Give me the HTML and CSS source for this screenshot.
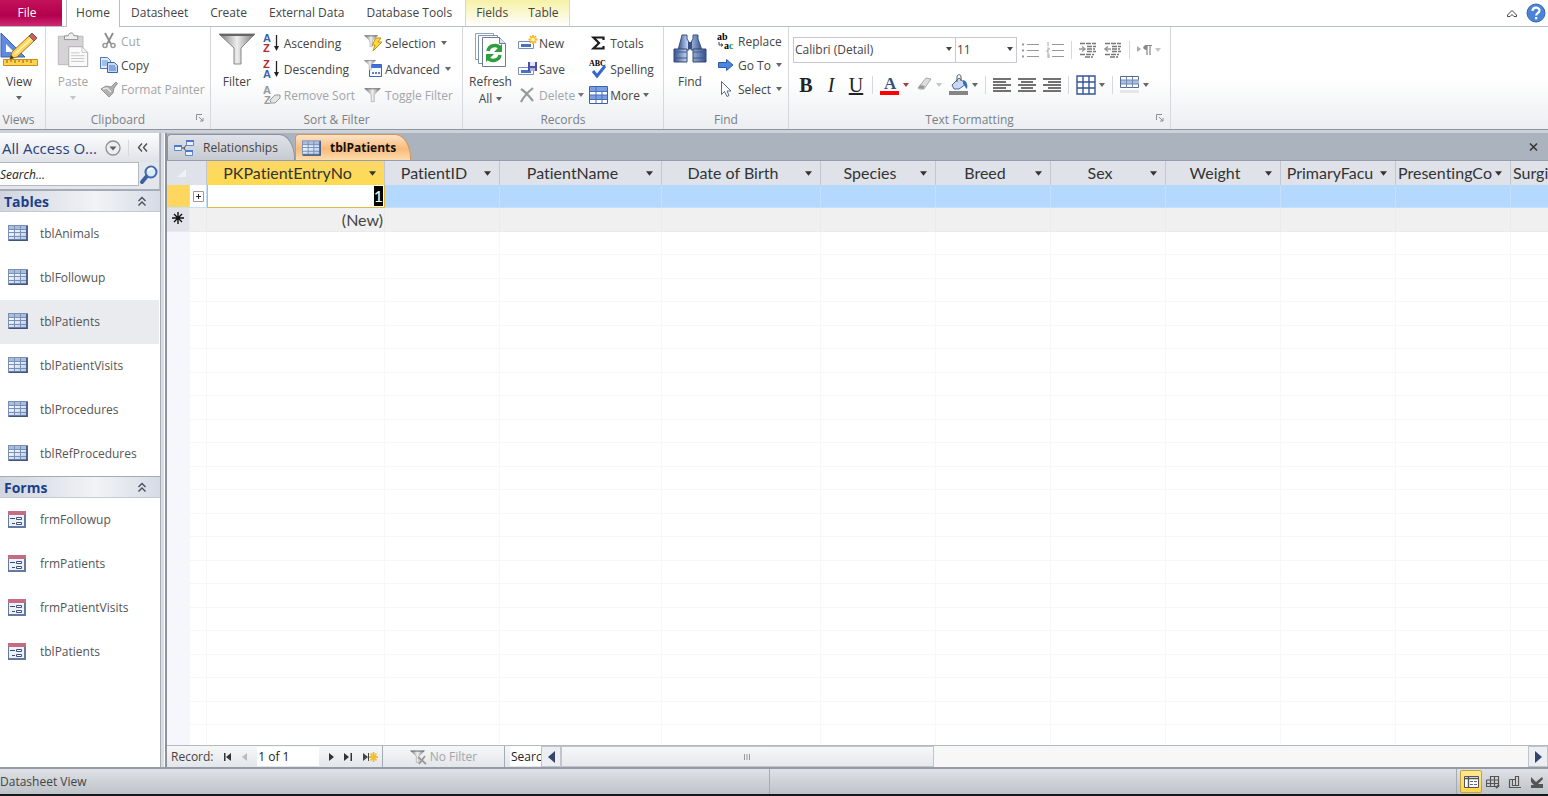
FILE: index.html
```html
<!DOCTYPE html>
<html lang="en">
    <head>
        <meta charset="UTF-8" />
        <meta name="viewport" content="width=device-width, initial-scale=1.0" />
        <title>tblPatients</title>
        <link rel="stylesheet" href="styles.css">
    </head>
    <body>
        <!-- Shared icons -->
        <svg class="defs" width="0" height="0">
            <defs>
                <linearGradient id="gray" x1="0" x2="1"><stop offset="0" stop-color="#777" /><stop offset=".5" stop-color="#eee" /><stop offset="1" stop-color="#777" /></linearGradient>
                <linearGradient id="blue" x1="0" x2="1"><stop offset="0" stop-color="#33528f" /><stop offset=".4" stop-color="#c3d5f3" /><stop offset="1" stop-color="#33528f" /></linearGradient>
                <linearGradient id="cell" x1="0" y1="0" x2="1" y2="1"><stop offset="0" stop-color="#fff" /><stop offset="1" stop-color="#b4c8ea" /></linearGradient>
            </defs>
            <symbol id="down" viewBox="0 0 6 4"><path d="M0 0h6L3 4z" fill="currentColor" /></symbol>
            <symbol id="table" viewBox="0 0 20 16">
                <path d="M0 0h20v16H0z" fill="#7890b8" />
                <path d="M19 1v14.500H1" fill="none" stroke="#3f5478" stroke-width="1.500" />
                <path d="M1 1h5v3H1zM7 1h5v3H7zM13 1h5v3h-5z" fill="#a9bede" />
                <path d="M1 5h5v2H1zM7 5h5v2H7zM13 5h5v2h-5zM1 8h5v3H1zM7 8h5v3H7zM13 8h5v3h-5zM1 12h5v2H1zM7 12h5v2H7zM13 12h5v2h-5z" fill="url(#cell)" />
            </symbol>
            <symbol id="form" viewBox="0 0 18 17">
                <path d="M0 0h18v17H0z" fill="#64799f" /><path d="M1 4h15v11H1z" fill="#edf1fa" />
                <path d="M0 0h18v4H0z" fill="#c66c82" />
                <path d="M2 7.500h5M4 12.500h3" stroke="#3c4d75" /><path d="M8.500 6.500h5v2h-5zM8.500 11.500h5v2h-5z" fill="#fff" stroke="#3f5184" />
            </symbol>
            <symbol id="funnel" viewBox="0 0 38 34"><path d="M1 1h36L23 15v16h-7V15z" fill="url(#gray)" stroke="#888" /><path d="M1 1h36l-2 2H3z" fill="#666" /></symbol>
            <symbol id="record" viewBox="0 0 20 14"><path d="M.5 5.500h15v7H.5z" fill="#fff" stroke="#7b8fb4" /><path d="M3 8h10v3H3z" fill="#4474c4" /></symbol>
            <symbol id="launcher" viewBox="0 0 8 8"><path d="M.5 6V.5H6M3 3l4 4M7 4v3H4" fill="none" stroke="#8a8f98" /></symbol>
            <symbol id="chev" viewBox="0 0 10 10"><path d="M1.500 5L5 1.500 8.500 5M1.500 9.500L5 6l3.500 3.500" fill="none" stroke="#4a4f58" stroke-width="1.400" /></symbol>
        </svg>

        <div class="app">
            <nav class="tabs">
                <button class="tab file">File</button>
                <button class="tab home">Home</button>
                <button class="tab">Datasheet</button>
                <button class="tab">Create</button>
                <button class="tab">External Data</button>
                <button class="tab">Database Tools</button>
                <div class="context-tabs">
                    <button class="tab">Fields</button>
                    <button class="tab">Table</button>
                </div>
                <div class="tabs-right">
                    <button class="icon-btn" aria-label="Minimize the Ribbon">
                        <svg width="12" height="9"><path d="M1.500 6L6 1.500 10.500 6v1.500H8L6 5.500l-2 2H1.500z" fill="#fff" stroke="#444" /></svg>
                    </button>
                    <button class="icon-btn" aria-label="Help">
                        <svg width="20" height="20"><circle cx="10" cy="10" r="9" fill="#4a83d8" stroke="#3566b0" /><path d="M6.500 8c0-4.500 7-4.500 7-.5 0 2.500-3.300 2.300-3.300 5" fill="none" stroke="#fff" stroke-width="2.200" /><path d="M9 14h2.300v2.300H9z" fill="#fff" /></svg>
                    </button>
                </div>
            </nav>

            <div class="ribbon">
                <section class="group views">
                    <div class="group-body">
                        <button class="big">
                            <svg width="38" height="36" viewBox="0 0 38 36">
                                <path d="M1 1v24h24z" fill="#5f8ae0" stroke="#3a60b4" /><path d="M6 12v8h8z" fill="#fff" />
                                <path d="M3.500 27.500h34v6h-34z" fill="#ffd34d" stroke="#c98f1c" /><path d="M7 28v3M11 28v2M15 28v3M19 28v2M23 28v3M27 28v2M31 28v3" stroke="#8a5c10" />
                                <path d="M12 20L30 3l5 5-18 17-7 2z" fill="#ffd45c" stroke="#9c7321" /><path d="M15 22L32 6" stroke="#fff3b5" stroke-width="1.500" /><path d="M29 4l3-3 5 5-3 3z" fill="#d9575b" stroke="#517157" /><path d="M10 27l1-4 3 3z" fill="#333" />
                            </svg>
                            <span>View</span>
                            <svg class="arrow" width="6" height="4"><use href="#down" /></svg>
                        </button>
                    </div>
                    <h2>Views</h2>
                </section>

                <section class="group clipboard">
                    <div class="group-body">
                        <button class="big" disabled>
                            <svg width="34" height="36" viewBox="0 0 34 38">
                                <path d="M1.500 4.500h26v30h-26z" fill="#d6d3d6" stroke="#b9b6b9" /><path d="M8 8V4h4c0-4 6-4 6 0h4v4z" fill="#eee" stroke="#8f8f8f" />
                                <path d="M12.500 15.500h14l6 6v15h-20z" fill="#fafafa" stroke="#aaa" /><path d="M26.500 15.500v6h6M15 22h9M15 25h14M15 28h14M15 31h14" fill="none" stroke="#c4c4c4" />
                            </svg>
                            <span>Paste</span>
                            <svg class="arrow" width="6" height="4"><use href="#down" /></svg>
                        </button>
                        <div class="col tight">
                            <button class="small" disabled>
                                <svg width="18" height="18"><path d="M5 1l6 11M13 1L7 12" stroke="#8c8c8c" stroke-width="1.800" /><circle cx="5" cy="13.500" r="2" fill="none" stroke="#999" stroke-width="1.500" /><circle cx="13" cy="13.500" r="2" fill="none" stroke="#999" stroke-width="1.500" /></svg>
                                Cut
                            </button>
                            <button class="small">
                                <svg width="18" height="18"><path d="M.5 1.500h7l3 3v8H.5z" fill="#e0ebfc" stroke="#4c76bd" /><path d="M2 5h6M2 7h6M2 9h6" stroke="#6d93d3" /><path d="M7.500 6.500h7l3 3v7h-10z" fill="#c6daf8" stroke="#3a64ae" /><path d="M9 10h6M9 12h7M9 14h7" stroke="#4574c4" /></svg>
                                Copy
                            </button>
                            <button class="small" disabled>
                                <svg width="18" height="18"><path d="M1 9l5-3 5 1 5-5 1.500 1.500L14 8l-1 5-4 4-4-4z" fill="#b0b0b0" stroke="#949494" /><path d="M3 9l4-1 4 4" fill="none" stroke="#e5e5e5" stroke-width="1.500" /></svg>
                                Format Painter
                            </button>
                        </div>
                    </div>
                    <h2>Clipboard</h2>
                    <button class="launcher" aria-label="Clipboard options"><svg width="8" height="8"><use href="#launcher" /></svg></button>
                </section>

                <section class="group sort">
                    <div class="group-body">
                        <button class="big">
                            <svg width="38" height="36"><use href="#funnel" width="38" height="34" y="1" /></svg>
                            <span>Filter</span>
                        </button>
                        <div class="col">
                            <button class="small">
                                <svg width="18" height="20"><text x="0" y="9" class="az blue">A</text><text x="0" y="19" class="az red">Z</text><path d="M13.500 2v13" stroke="#222" stroke-width="1.300" /><path d="M11 13h5l-2.500 5z" fill="#222" /></svg>
                                Ascending
                            </button>
                            <button class="small">
                                <svg width="18" height="20"><text x="0" y="9" class="az red">Z</text><text x="0" y="19" class="az blue">A</text><path d="M13.500 2v13" stroke="#222" stroke-width="1.300" /><path d="M11 13h5l-2.500 5z" fill="#222" /></svg>
                                Descending
                            </button>
                            <button class="small" disabled>
                                <svg width="18" height="20"><text x="0" y="9" class="az gray">A</text><text x="1" y="19" class="az gray">Z</text><path d="M7 15l5-5h5v3l-5 5H8z" fill="#e4e4e4" stroke="#999" /></svg>
                                Remove Sort
                            </button>
                        </div>
                        <div class="col">
                            <button class="small">
                                <svg width="18" height="18"><use href="#funnel" width="14" height="13" y="1" /><path d="M12 4h5l-3 4h4l-9 9 2-6H8z" fill="#ffd83a" stroke="#c39217" /></svg>
                                Selection
                                <svg class="arrow" width="6" height="4"><use href="#down" /></svg>
                            </button>
                            <button class="small">
                                <svg width="18" height="18"><path d="M5.500 4.500h12v12h-12z" fill="#f4f8ff" stroke="#3c66b8" /><path d="M6 5h11v3H6z" fill="#3f72d8" /><path d="M8 13h2M11 13h2M14 13h2" stroke="#36588f" stroke-width="1.500" /><use href="#funnel" width="12" height="11" /></svg>
                                Advanced
                                <svg class="arrow" width="6" height="4"><use href="#down" /></svg>
                            </button>
                            <button class="small" disabled>
                                <svg width="18" height="18"><use href="#funnel" width="17" height="15" y="2" /></svg>
                                Toggle Filter
                            </button>
                        </div>
                    </div>
                    <h2>Sort &amp; Filter</h2>
                </section>

                <section class="group records">
                    <div class="group-body">
                        <button class="big">
                            <svg width="34" height="36" viewBox="0 0 34 36">
                                <path d="M1.500 1.500h18v26h-18z" fill="#fff" stroke="#8fa1be" /><path d="M4.500 3.500h19v28h-19z" fill="#fff" stroke="#8091b0" /><path d="M8.500 5.500h17l6 6v23h-23z" fill="#fff" stroke="#6a7b98" /><path d="M25.500 5.500v6h6" fill="#dde5f2" stroke="#6a7b98" />
                                <path d="M14 19c1-6 9-7 12-3" fill="none" stroke="#2f9e3f" stroke-width="3.500" /><path d="M28 12v8h-8z" fill="#2f9e3f" /><path d="M26 23c-1 6-9 7-12 3" fill="none" stroke="#2f9e3f" stroke-width="3.500" /><path d="M12 30v-8h8z" fill="#2f9e3f" />
                            </svg>
                            <span>Refresh</span>
                            <span class="line">All <svg class="arrow" width="6" height="4"><use href="#down" /></svg></span>
                        </button>
                        <div class="col">
                            <button class="small">
                                <svg width="20" height="16"><use href="#record" width="20" height="14" y="1" /><path d="M15 0v9M10.500 4.500h9M12 1l6 7M18 1l-6 7" stroke="#f2b526" stroke-width="1.800" /><circle cx="15" cy="4.500" r="2" fill="#fff3a8" /></svg>
                                New
                            </button>
                            <button class="small">
                                <svg width="20" height="16"><use href="#record" width="20" height="14" y="1" /><path d="M10 1h9v9h-9z" fill="#4b4fa5" /><path d="M12 1h5v4h-5z" fill="#dfe7fa" /><path d="M12 7h5v3h-5z" fill="#aeb4dc" /></svg>
                                Save
                            </button>
                            <button class="small" disabled>
                                <svg width="20" height="16"><path d="M3 2c5 3 8 7 12 12M15 1C10 5 6 9 3 15" fill="none" stroke="#999" stroke-width="2.200" /></svg>
                                Delete
                                <svg class="arrow dark" width="6" height="4"><use href="#down" /></svg>
                            </button>
                        </div>
                        <div class="col">
                            <button class="small">
                                <svg width="20" height="18"><path d="M14.500 6V3.500h-10L10 9l-5.500 5.500h10V12" fill="none" stroke="#1c1c1c" stroke-width="2.200" /></svg>
                                Totals
                            </button>
                            <button class="small">
                                <svg width="20" height="20"><text x="0" y="7" class="abc">ABC</text><path d="M4 12l4 5 8-10" fill="none" stroke="#3568c8" stroke-width="3" /></svg>
                                Spelling
                            </button>
                            <button class="small">
                                <svg width="20" height="20"><path d="M.5 1.500h18v17H.5z" fill="#fff" stroke="#3b62ac" /><path d="M1 2h17v4H1zM1 10h17v4H1z" fill="#7ba0e2" /><path d="M1 6.500h17M1 10h17M1 14.500h17M7 2v16M13 6v12" stroke="#4870ba" /></svg>
                                More
                                <svg class="arrow" width="6" height="4"><use href="#down" /></svg>
                            </button>
                        </div>
                    </div>
                    <h2>Records</h2>
                </section>

                <section class="group find">
                    <div class="group-body">
                        <button class="big">
                            <svg width="34" height="36" viewBox="0 0 34 36">
                                <path d="M9 3h5v4l2 3v8H5l3-11zM20 3h5v4l4 11H18v-8l2-3z" fill="url(#blue)" stroke="#3a527f" /><path d="M15 10h4v7h-4z" fill="#39517e" />
                                <path d="M1 17h13v13H1zM20 17h13v13H20z" fill="url(#blue)" stroke="#34486f" /><path d="M1 20h13M20 20h13M1 26h13M20 26h13" stroke="#40598c" />
                            </svg>
                            <span>Find</span>
                        </button>
                        <div class="col tight">
                            <button class="small">
                                <svg width="18" height="20"><text x="0" y="9" class="abac">ab</text><text x="7" y="18" class="abac">a<tspan fill="#2f9140">c</tspan></text><path d="M2 11v3h3M4 12.500L6 14l-2 1.500" fill="none" stroke="#444" /></svg>
                                Replace
                            </button>
                            <button class="small">
                                <svg width="18" height="18"><path d="M1.500 6.500h8v-3L16 9l-6.500 5.500v-3h-8z" fill="#4b85e0" stroke="#2d5bab" /></svg>
                                Go To
                                <svg class="arrow" width="6" height="4"><use href="#down" /></svg>
                            </button>
                            <button class="small">
                                <svg width="18" height="18"><path d="M4.500 1.500v13l3-3 2.500 5 2-1-2-4.500h4z" fill="#fff" stroke="#5a6b8c" /></svg>
                                Select
                                <svg class="arrow" width="6" height="4"><use href="#down" /></svg>
                            </button>
                        </div>
                    </div>
                    <h2>Find</h2>
                </section>

                <section class="group text">
                    <div class="group-body">
                        <div class="format-row">
                            <div class="fonts">
                                <span class="combo name"><select aria-label="Font"><option>Calibri (Detail)</option></select><svg width="6" height="4"><use href="#down" /></svg></span>
                                <span class="combo size"><select aria-label="Font size"><option>11</option></select><svg width="6" height="4"><use href="#down" /></svg></span>
                            </div>
                            <button class="tool" aria-label="Bullets"><svg width="18" height="16"><path d="M6 2.500h12M6 8.500h12M6 14.500h12" stroke="#999" /><path d="M1 2.500h2M1 8.500h2M1 14.500h2" stroke="#999" stroke-width="2" /></svg></button>
                            <button class="tool" aria-label="Numbering"><svg width="18" height="16"><path d="M6 2.500h12M6 8.500h12M6 14.500h12" stroke="#999" /><path d="M2 0v4M1 6h2v2H1v2h2M1 12h2v4H1M1 14h2" fill="none" stroke="#aaa" /></svg></button>
                            <i class="sep"></i>
                            <button class="tool" aria-label="Decrease indent"><svg width="18" height="16"><path d="M1 1.500h16M8 4.500h9M8 7h8M8 9.500h9M1 12.500h14M6 15h8" stroke="#777" stroke-width="1.500" stroke-dasharray="5 1" /><path d="M0 7h5M3 4.500L6 7l-3 2.500" fill="none" stroke="#999" stroke-width="1.500" /></svg></button>
                            <button class="tool" aria-label="Increase indent"><svg width="18" height="16"><path d="M1 1.500h16M8 4.500h9M8 7h8M8 9.500h9M1 12.500h14M6 15h8" stroke="#777" stroke-width="1.500" stroke-dasharray="5 1" /><path d="M1 7h6M4 4.500L1 7l3 2.500" fill="none" stroke="#999" stroke-width="1.500" /></svg></button>
                            <i class="sep"></i>
                            <button class="tool" aria-label="Text direction"><svg width="15" height="14"><path d="M0 3l4 3-4 3z" fill="#aaa" /><path d="M10 12V2.500M13 12V2.500M8 2.500h7" fill="none" stroke="#888" stroke-width="1.200" /><path d="M10 2c-5 0-5 5 0 5z" fill="#888" /></svg><svg class="arrow pale" width="6" height="4"><use href="#down" /></svg></button>
                        </div>
                        <div class="format-row lower">
                            <button class="tool letter"><b>B</b></button>
                            <button class="tool letter"><em>I</em></button>
                            <button class="tool letter"><u>U</u></button>
                            <i class="sep"></i>
                            <button class="tool" aria-label="Font color"><svg width="20" height="22"><text x="4" y="15" class="fontcolor">A</text><path d="M0 17h19v4H0z" fill="#f00" /></svg><svg class="arrow red" width="6" height="4"><use href="#down" /></svg></button>
                            <button class="tool" aria-label="Highlight"><svg width="17" height="20"><path d="M2 13l8-10 5 1-7 10H3z" fill="#ddd" stroke="#aaa" /><path d="M2 13l2-3 5 1-2 3z" fill="#999" /></svg><svg class="arrow pale" width="6" height="4"><use href="#down" /></svg></button>
                            <button class="tool" aria-label="Background color"><svg width="20" height="22"><path d="M3 11l7-7 7 6-7 5H5z" fill="#c8d9f3" stroke="#48689f" /><path d="M8 8V3c0-3 4-3 4 0v4" fill="none" stroke="#555" /><path d="M14 6c4 1 5 5 4 9-2-1-2-4-4-5z" fill="#3c6cc0" /><path d="M0 17h19v4H0z" fill="#858585" /></svg><svg class="arrow" width="6" height="4"><use href="#down" /></svg></button>
                            <i class="sep"></i>
                            <button class="tool" aria-label="Align left"><svg width="18" height="16"><path d="M0 2h18M0 5h13M0 8h18M0 11h13M0 14h18" stroke="#444" stroke-width="1.300" /></svg></button>
                            <button class="tool" aria-label="Center"><svg width="18" height="16"><path d="M0 2h18M3 5h12M0 8h18M3 11h12M0 14h18" stroke="#444" stroke-width="1.300" /></svg></button>
                            <button class="tool" aria-label="Align right"><svg width="18" height="16"><path d="M0 2h18M5 5h13M0 8h18M5 11h13M0 14h18" stroke="#444" stroke-width="1.300" /></svg></button>
                            <i class="sep"></i>
                            <button class="tool" aria-label="Gridlines"><svg width="20" height="20"><path d="M1 1h18v18H1zM7 1v18M13 1v18M1 7h18M1 13h18" fill="#fff" stroke="#35549a" stroke-width="1.400" /></svg><svg class="arrow" width="6" height="4"><use href="#down" /></svg></button>
                            <i class="sep"></i>
                            <button class="tool" aria-label="Alternate row color"><svg width="20" height="20"><path d="M.5 1.500h18v11H.5z" fill="#fff" stroke="#566c8f" /><path d="M1 5h18v4H1z" fill="#a9c0e4" /><path d="M6.500 2v11M12.500 2v11M1 5h18M1 9h18" stroke="#6f87ad" /><path d="M0 15h19v3H0z" fill="#e4e6ea" /></svg><svg class="arrow" width="6" height="4"><use href="#down" /></svg></button>
                        </div>
                    </div>
                    <h2>Text Formatting</h2>
                    <button class="launcher" aria-label="Text formatting options"><svg width="8" height="8"><use href="#launcher" /></svg></button>
                </section>
            </div>

            <div class="workspace">
                <aside class="nav">
                    <div class="nav-title">
                        <span>All Access O...</span>
                        <button class="icon-btn round" aria-label="Choose category"><svg width="16" height="16"><circle cx="8" cy="8" r="7" fill="#eceef2" stroke="#8b8f97" stroke-width="1.300" /><path d="M4.500 6.500h7L8 10.500z" fill="#5b5f66" /></svg></button>
                        <button class="icon-btn collapse" aria-label="Collapse pane"><svg width="11" height="9"><path d="M5 .5L1.500 4.500 5 8.500M10 .5L6.500 4.500 10 8.500" fill="none" stroke="#4a4f58" stroke-width="1.400" /></svg></button>
                    </div>
                    <div class="nav-search">
                        <input type="text" placeholder="Search..." aria-label="Search objects">
                        <button class="icon-btn" aria-label="Search"><svg width="20" height="20"><path d="M3 17l5-6" stroke="#3b5f9f" stroke-width="4" stroke-linecap="round" /><circle cx="12" cy="7" r="5.500" fill="#dcebfc" stroke="#3d69b1" stroke-width="2" /><path d="M9 6c1-3 4-3 5-2" fill="none" stroke="#fff" stroke-width="1.500" /></svg></button>
                    </div>
                    <button class="nav-head">Tables <svg width="10" height="10"><use href="#chev" /></svg></button>
                    <ul class="nav-list">
                        <li><a href="#"><svg width="20" height="16"><use href="#table" /></svg>tblAnimals</a></li>
                        <li><a href="#"><svg width="20" height="16"><use href="#table" /></svg>tblFollowup</a></li>
                        <li><a href="#" class="selected"><svg width="20" height="16"><use href="#table" /></svg>tblPatients</a></li>
                        <li><a href="#"><svg width="20" height="16"><use href="#table" /></svg>tblPatientVisits</a></li>
                        <li><a href="#"><svg width="20" height="16"><use href="#table" /></svg>tblProcedures</a></li>
                        <li><a href="#"><svg width="20" height="16"><use href="#table" /></svg>tblRefProcedures</a></li>
                    </ul>
                    <button class="nav-head">Forms <svg width="10" height="10"><use href="#chev" /></svg></button>
                    <ul class="nav-list">
                        <li><a href="#"><svg width="20" height="17"><use href="#form" width="18" height="17" /></svg>frmFollowup</a></li>
                        <li><a href="#"><svg width="20" height="17"><use href="#form" width="18" height="17" /></svg>frmPatients</a></li>
                        <li><a href="#"><svg width="20" height="17"><use href="#form" width="18" height="17" /></svg>frmPatientVisits</a></li>
                        <li><a href="#"><svg width="20" height="17"><use href="#form" width="18" height="17" /></svg>tblPatients</a></li>
                    </ul>
                </aside>

                <main class="document">
                    <div class="doc-tabs">
                        <button class="doc-tab">
                            <svg width="20" height="18"><path d="M7 9h3l4-5M10 9l3 5" fill="none" stroke="#444" /><path d="M.5 6.500h7v5h-7zM12.500 1.500h7v5h-7zM11.500 11.500h7v5h-7z" fill="#eaf2ff" stroke="#6288c5" /><path d="M0 6h8v2H0zM12 1h8v2h-8zM11 11h8v2h-8z" fill="#4a7bd0" /></svg>
                            Relationships
                        </button>
                        <button class="doc-tab active">
                            <svg width="19" height="16"><use href="#table" width="19" height="16" /></svg>
                            tblPatients
                        </button>
                        <button class="icon-btn close" aria-label="Close"><svg width="9" height="8"><path d="M1 .5l7 7M8 .5l-7 7" stroke="#333" stroke-width="1.500" /></svg></button>
                    </div>

                    <div class="datasheet">
                        <table>
                            <colgroup>
                                <col class="c-select"><col class="c-expand"><col class="c-key"><col class="c-std"><col class="c-name"><col class="c-date">
                                <col class="c-std"><col class="c-std"><col class="c-std"><col class="c-std"><col class="c-std"><col class="c-std"><col class="c-std">
                            </colgroup>
                            <thead>
                                <tr id="headings">
                                    <th colspan="2" class="corner"><svg width="9" height="8"><path d="M9 0v8H0z" fill="#eef1f6" /></svg></th>
                                </tr>
                            </thead>
                            <tbody id="rows">
                                <tr class="current">
                                    <td class="selector"></td>
                                    <td class="expand"><button aria-label="Expand"><svg width="11" height="11"><path d="M.5.5h10v10H.5z" fill="#fff" stroke="#9a9a9a" /><path d="M3 5.500h5M5.500 3v5" stroke="#222" /></svg></button></td>
                                    <td class="key"><span>1</span></td>
                                </tr>
                                <tr class="new">
                                    <td class="selector"><svg width="12" height="12"><path d="M6 0v12M0 6h12M2 2l8 8M10 2l-8 8" stroke="#111" stroke-width="1.400" /></svg></td>
                                    <td></td>
                                    <td class="key">(New)</td>
                                </tr>
                            </tbody>
                        </table>
                    </div>

                    <div class="record-bar">
                        <div class="record-nav">
                            <label for="record">Record:</label>
                            <button class="icon-btn" aria-label="First record"><svg width="9" height="8"><path d="M1 0h1.500v8H1zM8 0v8L3 4z" fill="#333" /></svg></button>
                            <button class="icon-btn" aria-label="Previous record"><svg width="6" height="8"><path d="M5 0v8L0 4z" fill="#bbb" /></svg></button>
                            <input type="text" id="record" value="1 of 1">
                            <button class="icon-btn" aria-label="Next record"><svg width="6" height="8"><path d="M0 0v8l5-4z" fill="#333" /></svg></button>
                            <button class="icon-btn" aria-label="Last record"><svg width="9" height="8"><path d="M6.500 0H8v8H6.500zM0 0v8l5-4z" fill="#333" /></svg></button>
                            <button class="icon-btn" aria-label="New record"><svg width="15" height="10"><path d="M0 1v8l5-4zM5 1h1v8H5z" fill="#444" /><path d="M10.500 0v10M6 5h9M7.500 1.500l6 7M13.500 1.500l-6 7" stroke="#f0c030" stroke-width="1.800" /></svg></button>
                        </div>
                        <button class="no-filter" disabled><svg width="18" height="16"><use href="#funnel" width="15" height="14" y="1" /><path d="M8 8l8 7M15 7l-6 8" stroke="#999" stroke-width="1.800" /></svg>No Filter</button>
                        <input type="text" class="record-search" value="Search" aria-label="Search records">
                        <div class="scrollbar">
                            <button aria-label="Scroll left"><svg width="7" height="12"><path d="M7 0v12L0 6z" fill="#33456c" /></svg></button>
                            <div class="thumb"><svg width="6" height="6"><path d="M.5 0v6M3 0v6M5.500 0v6" stroke="#999" /></svg></div>
                            <button class="right" aria-label="Scroll right"><svg width="7" height="12"><path d="M0 0v12l7-6z" fill="#33456c" /></svg></button>
                        </div>
                    </div>
                </main>
            </div>

            <footer class="status">
                <span class="status-text">Datasheet View</span>
                <div class="view-buttons">
                    <button class="view-btn on" aria-label="Datasheet view"><svg width="15" height="12"><path d="M.5.5h14v11H.5z" fill="#fff" stroke="#555" /><path d="M1 2.500h14M4.500 1v11" stroke="#555" stroke-width="1.400" /><path d="M6 5.500h3M10 5.500h3M6 8.500h3M10 8.500h3" stroke="#666" /></svg></button>
                    <button class="view-btn" aria-label="PivotTable view"><svg width="14" height="14"><path d="M4.500 1.500h8v10h-8zM.5 5h12M.5 8.500h12M.5 5v6.500h4M8.500 1.500v10" fill="none" stroke="#555" stroke-width="1.200" /><path d="M10 13l3-3" stroke="#555" stroke-width="2" /></svg></button>
                    <button class="view-btn" aria-label="PivotChart view"><svg width="14" height="14"><path d="M1.500 4.500v8H13M1.500 4.500h3" fill="none" stroke="#555" stroke-width="1.200" /><path d="M4.500 4.500h3v6h-3zM7.500 1.500h3v9h-3z" fill="#ddd" stroke="#555" stroke-width="1.200" /></svg></button>
                    <button class="view-btn" aria-label="Design view"><svg width="14" height="14"><path d="M1 2l5 5 6-5 1 2-5 5h5v4H1v-3h3L1 7z" fill="#555" /></svg></button>
                </div>
            </footer>
        </div>

        <script>
            const columns = ["PKPatientEntryNo", "PatientID", "PatientName", "Date of Birth", "Species", "Breed", "Sex", "Weight", "PrimaryFacu", "PresentingCo", "Surgi"];
            const blankRows = 24;

            const headings = document.getElementById("headings");
            columns.forEach((name, i) => {
                const th = document.createElement("th");
                if (i === 0) th.className = "sorted";
                if (i === columns.length - 1) th.className = "last";
                th.innerHTML = `<div class="heading"><span>${name}</span><button aria-label="${name} options"><svg width="7" height="5"><use href="#down" /></svg></button></div>`;
                headings.appendChild(th);
            });

            const rows = document.getElementById("rows");
            for (let i = 0; i < blankRows; i++) {
                rows.appendChild(document.createElement("tr"));
            }

            // Pad every row out to the full number of cells
            for (const row of rows.rows) {
                while (row.cells.length < columns.length + 2) {
                    const cell = row.insertCell();
                    if (cell.cellIndex === 0) cell.className = "selector";
                }
            }
        </script>
    </body>
</html>
```
FILE: styles.css
```css
* {
    box-sizing: border-box;
}
body {
    margin: 0;
    font-family: "Open Sans", "Noto Sans", sans-serif;
    font-size: 12px;
    color: #444;
    background-color: #fff;
}
button,
input,
select {
    font: inherit;
    color: inherit;
}
button {
    padding: 0;
    border: none;
    background: none;
    white-space: nowrap;
}
svg {
    flex: none;
    display: block;
}
.defs {
    position: absolute;
}
.app {
    display: flex;
    flex-direction: column;
    height: 100vh;
    overflow: hidden;
    border-bottom: 2px solid #16181c;
}

/* Ribbon tabs */
.tabs {
    display: flex;
    flex: none;
    height: 27px;
    border-bottom: 1px solid #b9bdc4;
}
.tab {
    height: 26px;
    padding: 0 11px 2px;
}
.tab.file {
    width: 62px;
    padding-right: 19px;
    background: linear-gradient(#c3125c, #b3004c 60%, #cf2a74);
    color: #fff;
}
.tab.home {
    height: 27px;
    width: 54px;
    margin-left: 4px;
    border: 1px solid #b9bdc4;
    border-top: none;
    border-bottom: none;
    background-color: #fff;
    padding: 0 0 3px;
}
.context-tabs {
    display: flex;
    margin-left: 2px;
    border-left: 1px solid #e6dc8c;
    border-right: 1px solid #e6dc8c;
    background: linear-gradient(#f6f1a6, #fdfcec 80%, #fff);
}
.context-tabs .tab {
    padding: 0 10px 2px;
}
.tabs-right {
    display: flex;
    align-items: center;
    gap: 8px;
    margin-left: auto;
    padding-right: 2px;
}

/* Ribbon */
.ribbon {
    display: flex;
    flex: none;
    height: 103px;
    background: linear-gradient(#fff 50%, #eceef1);
    border-bottom: 1px solid #8e959f;
}
.group {
    position: relative;
    display: flex;
    flex-direction: column;
    border-right: 1px solid #d5d8dc;
}
.group h2 {
    margin: 0;
    font-size: 12px;
    font-weight: normal;
    line-height: 18px;
    text-align: center;
    color: #7a7f88;
}
.group-body {
    display: flex;
    flex: 1;
    align-items: flex-start;
    padding-top: 5px;
}
.views {
    width: 46px;
}
.views h2 {
    padding-right: 8px;
}
.clipboard {
    width: 165px;
}
.sort {
    width: 252px;
}
.records {
    width: 201px;
}
.find {
    width: 125px;
}
.text {
    width: 382px;
}
.clipboard h2,
.text h2 {
    padding-right: 20px;
}
.big {
    display: flex;
    flex-direction: column;
    align-items: center;
    line-height: 17px;
}
.big > svg:first-child {
    margin-bottom: 5px;
}
.big > .arrow {
    margin-top: 6px;
}
.line {
    display: flex;
    align-items: center;
    gap: 4px;
}
.arrow {
    color: #666;
}
button:disabled {
    color: #a3a5a9;
}
button:disabled .arrow,
.arrow.pale {
    color: #c3c5c8;
}
button:disabled .arrow.dark {
    color: #777;
}
.arrow.red {
    color: #9c4040;
}
.views .big {
    width: 38px;
}
.clipboard .big {
    width: 54px;
}
.sort .big,
.records .big {
    width: 55px;
}
.find .big {
    width: 52px;
}
.col {
    display: flex;
    flex-direction: column;
    margin-top: -2px;
}
.sort .col {
    margin-right: 9px;
}
.records .col {
    margin-right: 5px;
}
.small {
    display: flex;
    align-items: center;
    gap: 3px;
    height: 26px;
}
.records .small {
    gap: 1px;
}
.small .arrow {
    margin-left: 2px;
}
.tight {
    margin-top: -3px;
}
.tight .small {
    height: 24px;
}
.find .col {
    margin-left: 1px;
}
.launcher {
    position: absolute;
    right: 6px;
    bottom: 7px;
}
.az {
    font: bold 11px "Liberation Sans", sans-serif;
}
.blue {
    fill: #3b62ae;
}
.red {
    fill: #b02a2a;
}
.gray {
    fill: #999;
}
.abc {
    font: bold 8px "Liberation Serif", serif;
}
.abac {
    font: bold 10px "Liberation Serif", serif;
}
.fontcolor {
    font: bold 17px "Liberation Serif", serif;
    fill: #35507f;
}

/* Text formatting */
.text .group-body {
    flex-direction: column;
    padding: 10px 4px 0;
}
.format-row {
    display: flex;
    align-items: center;
    height: 26px;
    gap: 7px;
}
.format-row.lower {
    margin-top: 9px;
    padding-left: 4px;
}
.fonts {
    display: flex;
    margin-right: -3px;
}
.combo {
    display: flex;
    align-items: center;
    height: 26px;
    border: 1px solid #c6c9ce;
    padding: 0 3px 2px 0;
    background-color: #fff;
}
.combo.name {
    width: 163px;
}
.combo.size {
    width: 61px;
    border-left: none;
}
.combo select {
    flex: 1;
    min-width: 0;
    appearance: none;
    border: none;
    padding: 0 1px;
    background: none;
}
.tool {
    display: flex;
    align-items: center;
    gap: 3px;
}
.sep {
    width: 1px;
    height: 18px;
    background-color: #d5d8dc;
}
.letter {
    justify-content: center;
    width: 18px;
    font: 20px "Liberation Serif", serif;
    color: #222;
}

/* Navigation pane */
.workspace {
    display: flex;
    flex: 1;
    min-height: 0;
    border-top: 3px solid #cdd2d9;
}
.nav {
    flex: none;
    width: 167px;
    border-right: 2px solid #8e939b;
    box-shadow: inset -1px 0 #fff, inset -4px 0 #d9dde4, inset -5px 0 #a5abb5;
    padding-right: 5px;
    background-color: #fff;
}
.nav-title {
    display: flex;
    align-items: center;
    height: 29px;
    padding-left: 2px;
    background: linear-gradient(#fdfdfe, #dfe2e8);
    border-right: 1px solid #b3b8c1;
    color: #27427c;
    font-size: 15px;
}
.nav-title span {
    flex: 1;
}
.round {
    padding-right: 7px;
    border-right: 1px solid #d5d8dc;
}
.collapse {
    padding: 0 11px 0 8px;
}
.nav-search {
    display: flex;
    align-items: center;
    height: 28px;
    background-color: #e3e6ec;
    border-bottom: 1px solid #a5abb5;
    border-right: 1px solid #b3b8c1;
}
.nav-search input {
    flex: 1;
    min-width: 0;
    height: 24px;
    border: 1px solid #b3b8c1;
    border-left: none;
    padding: 0;
    font-style: italic;
    margin-bottom: 3px;
}
.nav-search input::placeholder {
    color: #222;
}
.nav-search .icon-btn {
    padding-bottom: 2px;
}
.nav-head {
    display: flex;
    align-items: center;
    justify-content: space-between;
    width: 100%;
    height: 22px;
    padding: 0 13px 0 4px;
    background: linear-gradient(90deg, #d0d5df, #f1f3f5 60%, #d6dbe6);
    border-top: 1px solid #a5abb5;
    border-bottom: 1px solid #c4c9d2;
    color: #1e3f8a;
    font-size: 14px;
    font-weight: bold;
}
.nav-list {
    list-style: none;
    margin: 0;
    padding: 0;
}
.nav-list a {
    display: flex;
    align-items: center;
    gap: 12px;
    height: 44px;
    padding: 0 8px 2px;
    margin-right: 1px;
    color: #555;
    text-decoration: none;
}
.nav-list .selected {
    background-color: #e9ebee;
}

/* Document area */
.document {
    display: flex;
    flex: 1;
    flex-direction: column;
    min-width: 0;
}
.doc-tabs {
    display: flex;
    flex: none;
    align-items: flex-end;
    height: 28px;
    background-color: #abb3be;
    border-bottom: 1px solid #959da9;
}
.doc-tab {
    display: flex;
    align-items: center;
    gap: 9px;
    height: 26px;
    width: 128px;
    padding-left: 6px;
    border: 1px solid #8e959f;
    border-bottom: none;
    border-radius: 4px 16px 0 0 / 4px 24px 0 0;
    background: linear-gradient(#dfe2e7, #c6cbd3);
}
.doc-tab.active {
    width: 116px;
    border-color: #d3975c;
    background: linear-gradient(#fde3c8, #f9ba79 55%, #fcdcae);
    color: #111;
    font-weight: bold;
}
.close {
    align-self: center;
    margin-left: auto;
    padding-right: 10px;
}
.datasheet {
    flex: 1;
    min-height: 0;
    overflow: hidden;
    font-family: Lato, Carlito, sans-serif;
    font-size: 16px;
    font-variant-ligatures: none;
}
.datasheet table {
    table-layout: fixed;
    width: 1459px;
    border-collapse: separate;
    border-spacing: 0;
}
.c-select {
    width: 23px;
}
.c-expand {
    width: 17px;
}
.c-key {
    width: 178px;
}
.c-std {
    width: 115px;
}
.c-name {
    width: 162px;
}
.c-date {
    width: 159px;
}
th,
td {
    padding: 0;
    height: 23px;
    border-right: 1px solid #f7f7f8;
    border-bottom: 1px solid #f7f7f8;
    line-height: 20px;
}
tbody tr:nth-child(even) td {
    height: 24px;
}
th {
    height: 24px;
    border-right: 1px solid #c3c8d0;
    border-bottom: none;
    background-color: #dfe3e9;
    font-weight: normal;
    color: #333;
}
.corner svg {
    margin-left: 10px;
}
.sorted {
    background: linear-gradient(#fbd768, #fedb4f);
}
.heading {
    display: flex;
    align-items: center;
}
.heading span {
    flex: 1;
    overflow: hidden;
    margin-left: 2px;
    white-space: nowrap;
}
.heading button {
    width: 18px;
    padding-left: 3px;
}
.last .heading {
    text-align: left;
}
.selector {
    background-color: #f6f6fd;
}
.current td {
    background-color: #b5d9fe;
    border-color: #c3e0fe;
}
.current .selector {
    background-color: #ffd75e;
}
.current .expand {
    background-color: #fff;
}
.expand svg {
    margin: 0 3px;
}
.key {
    padding-right: 1px;
    text-align: right;
}
.current .key {
    background-color: #fff;
    border: 1px solid #dfb942;
    border-top: none;
    padding-right: 1px;
}
.current .key span {
    display: inline-block;
    background-color: #000;
    color: #fff;
}
.new td {
    background-color: #f0f0f0;
    border-color: #eaeaea;
}
.new .selector {
    background-color: #e0e3e9;
}
.new .selector svg {
    margin: 0 auto 4px 5px;
}

/* Record bar */
.record-bar {
    display: flex;
    flex: none;
    height: 22px;
    border-top: 1px solid #b3b8c1;
    background: linear-gradient(#f6f7f8, #e3e6ea);
}
.record-nav {
    display: flex;
    align-items: center;
    justify-content: space-between;
    width: 216px;
    padding: 0 4px;
    border-right: 1px solid #a5abb5;
}
.record-nav input {
    width: 62px;
    height: 19px;
    border: none;
    padding: 0 1px;
    background-color: #fff;
    color: #222;
}
.no-filter {
    display: flex;
    align-items: center;
    justify-content: center;
    gap: 2px;
    width: 122px;
    border-right: 1px solid #a5abb5;
}
.record-search {
    width: 31px;
    height: 20px;
    margin-left: 5px;
    border: none;
    padding: 0 0 0 1px;
    color: #222;
}
.scrollbar {
    display: flex;
    flex: 1;
    background-color: #f7f7f8;
}
.scrollbar button {
    display: flex;
    align-items: center;
    justify-content: center;
    width: 20px;
    border: 1px solid #c0c5cd;
    background-color: #eceef1;
}
.scrollbar .right {
    margin-left: auto;
}
.thumb {
    display: flex;
    align-items: center;
    justify-content: center;
    width: 37%;
    border: 1px solid #c0c5cd;
    background: linear-gradient(#f6f7f8, #e6e8ec);
}

/* Status bar */
.status {
    display: flex;
    flex: none;
    height: 27px;
    border-top: 2px solid #959ba5;
    background: linear-gradient(#dfe2e6, #bec3c9);
}
.status-text {
    display: flex;
    align-items: center;
    width: 770px;
    border-right: 1px solid #a5abb5;
}
.view-buttons {
    display: flex;
    align-items: center;
    margin-left: auto;
    padding-left: 3px;
    border-left: 1px solid #a5abb5;
}
.view-btn {
    display: flex;
    align-items: center;
    justify-content: center;
    width: 22px;
    height: 23px;
}
.view-btn.on {
    background: linear-gradient(#ffe99a, #ffd54f);
    border: 1px solid #c9a13a;
    border-radius: 2px;
}
```
